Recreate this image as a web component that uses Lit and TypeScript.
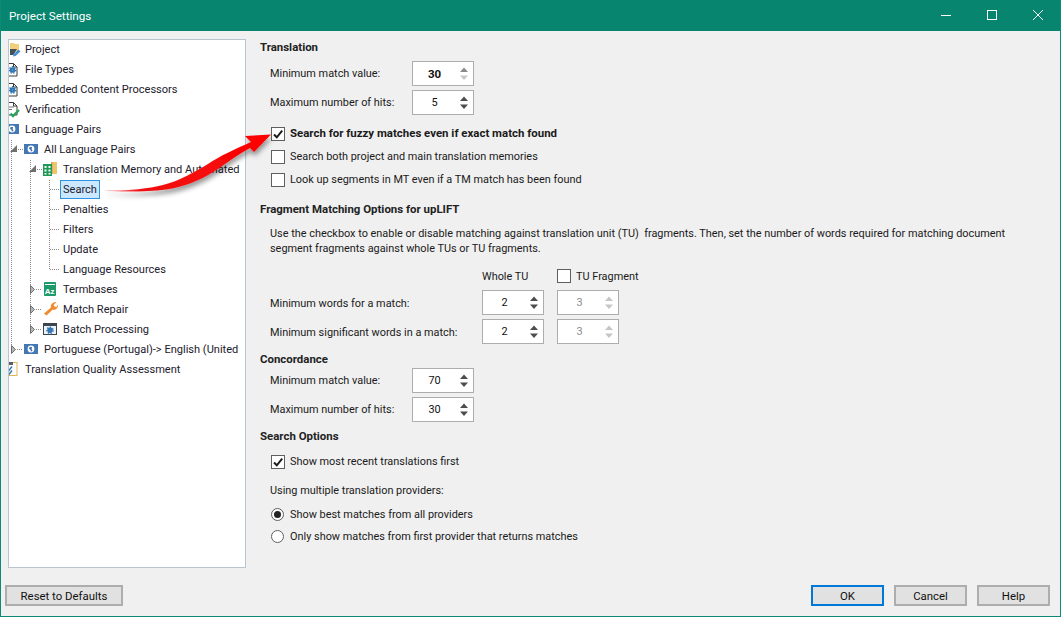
import { LitElement, html, css, svg } from "lit";
import { customElement } from "lit/decorators.js";

const gear = (cx: number, cy: number, r: number, fill = "#2f74b5") => svg`
  <circle cx=${cx} cy=${cy} r=${r} fill="none" stroke=${fill} stroke-width="2.4"/>
  <circle cx=${cx} cy=${cy} r=${r + 1.6} fill="none" stroke=${fill} stroke-width="1.4" stroke-dasharray="1.4 1.4"/>`;

const doc = (y: number) => svg`<path d="M3.500 ${y + 0.5}h7l3.500 3.500v${9}h-10.500z" fill="#fff" stroke="#3c3c3c"/><path d="M10.500 ${y + 0.5}v3.500h3.500" fill="none" stroke="#3c3c3c"/>`;

const globe = (y: number) => svg`<rect x="2" y=${y} width="14" height="10" fill="#4478b4"/><circle cx="9" cy=${y + 5} r="3.400" fill="#fff"/><path d="M7.600 ${y + 3}h2.600l-.6 2 1 1.400-1.600 1.400-.6-2-1.400-1z" fill="#4478b4"/>`;

const ICONS: Record<string, unknown> = {
  project: svg`<path d="M7 3h4l1 1h4v8H7z" fill="#f2cf7d"/><path d="M7 9h7l-3.500 6H7z" fill="#44505c"/><path d="M10.500 14.500l5-5 2 2-5 4.500-2.500.5z" fill="#3d8fd1"/>`,
  file: svg`${doc(3)}${gear(9.500, 10, 1.600)}`,
  verify: svg`${doc(2)}<path d="M6 7h5M6 9.500h3" stroke="#777"/><path d="M7.500 13.500l2.500 2.500 6-6" fill="none" stroke="#27a35a" stroke-width="2.400"/>`,
  globe: globe(4),
  tm: svg`<rect x="10" y="2" width="6" height="12" fill="#f0c36d"/><rect x="10" y="2" width="1.500" height="12" fill="#c9a55e"/><rect x="2" y="4" width="9" height="12" fill="#1e9a56"/><path d="M3.500 6h2v2h-2zM7.500 6h2v2h-2zM3.500 9.500h2v2h-2zM7.500 9.500h2v2h-2zM3.500 13h2v1.500h-2zM7.500 13h2v1.500h-2z" fill="#fff"/>`,
  term: svg`<rect x="3" y="2" width="12" height="14" rx="1" fill="#1e9a6a"/><rect x="4" y="4" width="10" height="1" fill="#fff"/><text x="3.800" y="14" font-size="8" font-weight="700" font-family="Liberation Sans, sans-serif" fill="#fff">Az</text>`,
  wrench: svg`<path d="M3 13.500l7-6c-.8-3 1.500-5.500 5.500-5.500l-2.800 2.800.7 1.800 2 .4L17 4.500c.4 3.500-2.500 6-5.500 5.200L5.500 15.500z" fill="#ef8a2e"/>`,
  batch: svg`<rect x="2.500" y="3.500" width="13" height="11" fill="#eef2f6" stroke="#3d4650"/><rect x="2" y="3" width="14" height="3" fill="#3d4650"/>${gear(9, 10.300, 1.500)}`,
  qa: svg`<rect x="4.500" y="2.500" width="9.500" height="13" fill="#fff" stroke="#e2b65b"/><path d="M4 2h6v3H4z" fill="#55606a"/><path d="M4 8.500l2 2 3-4M4 12.500l2 2 3-4" fill="none" stroke="#2f74b5" stroke-width="1.400"/>`,
};

const TREE: [number, string, string][] = [
  [0, "project", "Project"],
  [0, "file", "File Types"],
  [0, "file", "Embedded Content Processors"],
  [0, "verify", "Verification"],
  [0, "globe", "Language Pairs"],
  [1, "globe", "All Language Pairs"],
  [2, "tm", "Translation Memory and Automated"],
  [3, "", "Search"],
  [3, "", "Penalties"],
  [3, "", "Filters"],
  [3, "", "Update"],
  [3, "", "Language Resources"],
  [2, "term", "Termbases"],
  [2, "wrench", "Match Repair"],
  [2, "batch", "Batch Processing"],
  [1, "globe", "Portuguese (Portugal)-> English (United"],
  [0, "qa", "Translation Quality Assessment"],
];

@customElement("ui-spin")
class UiSpin extends LitElement {
  static properties = { value: {}, bold: { type: Boolean }, off: { type: Boolean }, top: { type: Boolean } };
  value = "";
  bold = false;
  off = false;
  top = false;
  static styles = css`
    :host { display: block; width: 62px; height: 25px; }
    .box { box-sizing: border-box; height: 25px; display: flex; align-items: center; background: #fff; border: 1px solid #adadad; color: #111; }
    .val { width: 43px; text-align: center; }
    .bold { font-weight: 700; font-size: 11.5px; }
    .off { color: #8c8c8c; }
    svg { display: block; margin: -1px 0 0 3px; }
  `;
  render() {
    const up = this.off ? "#c6c6c6" : this.top ? "#8a8a8a" : "#4d4d4d";
    const dn = this.off ? "#c6c6c6" : this.top ? "#c6c6c6" : "#4d4d4d";
    return html`<div class="box">
      <span class="val ${this.bold ? "bold" : ""} ${this.off ? "off" : ""}">${this.value}</span>
      <svg width="10" height="15" viewBox="0 0 10 15"><path d="M5 1.500l4 4.500h-8z" fill=${up}/><path d="M5 14L9 9.500h-8z" fill=${dn}/></svg>
    </div>`;
  }
}

@customElement("ui-check")
class UiCheck extends LitElement {
  static properties = { checked: { type: Boolean }, bold: { type: Boolean } };
  checked = false;
  bold = false;
  static styles = css`
    :host { display: flex; align-items: center; height: 23px; padding-left: 11px; color: #1a1a1a; }
    .b { box-sizing: border-box; flex: none; width: 14px; height: 14px; border: 1px solid #5f5f5f; background: #fff; margin-right: 5px; display: block; }
    .bold { font-weight: 700; font-size: 11.45px; padding-bottom: 2px; }
  `;
  render() {
    return html`<svg class="b" viewBox="0 0 12 12">${this.checked ? svg`<path d="M2 6.500l2.800 2.800L10.200 2.600" fill="none" stroke="#1c1c1c" stroke-width="2"/>` : ""}</svg>
      <span class=${this.bold ? "bold" : ""}><slot></slot></span>`;
  }
}

@customElement("app-root")
export class AppRoot extends LitElement {
  static styles = css`
    :host {
      display: flex; flex-direction: column; position: relative; box-sizing: border-box;
      width: 1061px; height: 617px; overflow: hidden; background: #f0f0f0;
      border: 1px solid #0a8a77; border-top: 0;
      font: 10.9px Roboto, "Noto Sans", sans-serif; color: #1a1a1a;
    }
    .title { flex: none; height: 31px; background: #07856f; color: #fff; display: flex; align-items: center; padding-left: 8px; font-size: 11.7px; }
    .title span { flex: 1; }
    .wc { display: block; width: 46px; height: 31px; }
    .wc.last { margin-right: -1px; }
    .main { flex: 1; display: flex; padding: 7px 0 0 7px; min-height: 0; }
    .tree { position: relative; flex: none; box-sizing: border-box; width: 238px; height: 529px; margin-top: 1px; background: #fff; border: 1px solid #b9c6cf; overflow: hidden; }
    .guides { position: absolute; left: 0; top: 0; }
    .rows { position: relative; margin-left: -6px; width: 300px; margin-top: -1px; }
    .row { height: 20px; display: flex; align-items: center; white-space: nowrap; color: #22202c; font-size: 11.05px; }
    .row svg { flex: none; margin-right: 4px; display: block; }
    .leaf { box-sizing: border-box; padding: 0 2px; margin-top: 1px; line-height: 17px; height: 19px; border: 1px solid transparent; }
    .sel { background: #cce8ff; border-color: #2f93e0; }
    .pane { flex: 1; padding-left: 14px; }
    h3 { margin: 0; height: 18px; line-height: 19px; font-size: 11.45px; font-weight: 700; color: #222; }
    .in { padding-left: 10px; }
    .line { display: flex; align-items: center; height: 25px; margin-bottom: 4px; }
    .lbl { width: 142px; flex: none; }
    .frag { width: 212px; flex: none; padding-top: 1px; }
    .gap { margin-left: 13px; }
    p { margin: 8px 0 0 10px; width: 745px; line-height: 15px; }
    .hdr { display: flex; align-items: center; height: 20px; margin: 10px 0 4px 222px; }
    .hdr b { font-weight: 400; width: 64px; }
    .radio { display: flex; align-items: center; height: 22px; padding-left: 11px; }
    .dot { box-sizing: border-box; flex: none; width: 13px; height: 13px; border: 1px solid #5f5f5f; border-radius: 50%; margin-right: 6px; background: #fff; display: flex; align-items: center; justify-content: center; }
    .dot.on::after { content: ""; width: 7px; height: 7px; border-radius: 50%; background: #222; }
    .foot { flex: none; height: 21px; display: flex; gap: 10px; padding: 0 10px 10px 4px; }
    .foot button { box-sizing: border-box; width: 73px; height: 21px; padding: 1px 0 0; background: #e1e1e1; border: 2px solid #adadad; font: inherit; font-size: 11.4px; color: #111; }
    .foot .reset { width: 118px; margin-right: auto; }
    .foot .ok { border-color: #0078d7; }
    .arrow { position: absolute; left: 0; top: 0; pointer-events: none; overflow: visible; }
  `;

  private guides() {
    const dots = "1 1";
    const h = (x1: number, x2: number, y: number) => svg`<path d="M${x1} ${y + 0.5}H${x2}" stroke="#8a8a8a" stroke-dasharray=${dots}/>`;
    const v = (x: number, y1: number, y2: number) => svg`<path d="M${x + 0.5} ${y1}V${y2}" stroke="#8a8a8a" stroke-dasharray=${dots}/>`;
    const open = (x: number, y: number) => svg`<path d="M${x} ${y + 7}l7-7v7z" fill="#6f6f6f"/>`;
    const shut = (x: number, y: number) => svg`<path d="M${x}.5 ${y}.5l4 4-4 4z" fill="#b5b5b5" stroke="#6f6f6f"/>`;
    return svg`<svg class="guides" width="236" height="527">
      ${v(2, 100, 305)}
      ${v(21, 120, 285)}
      ${v(40, 140, 229)}
      ${h(9, 14, 109)}
      ${h(28, 33, 129)}
      ${[149, 169, 189, 209, 229].map((y) => h(41, 50, y))}
      ${h(27, 33, 249)}${h(27, 33, 269)}${h(27, 33, 289)}
      ${h(8, 14, 309)}
      ${open(1, 105)}${open(20, 125)}
      ${shut(21, 245)}${shut(21, 265)}${shut(21, 285)}
      ${shut(2, 305)}
    </svg>`;
  }

  render() {
    return html`
      <div class="title"><span>Project Settings</span>
        <svg class="wc" viewBox="0 0 46 31"><path d="M18 15.500h10" stroke="#fff"/></svg>
        <svg class="wc" viewBox="0 0 46 31"><rect x="18.500" y="10.500" width="9" height="9" fill="none" stroke="#fff"/></svg>
        <svg class="wc last" viewBox="0 0 46 31"><path d="M18 10l10 10M28 10L18 20" stroke="#fff" fill="none"/></svg>
      </div>
      <div class="main">
        <div class="tree">
          ${this.guides()}
          <div class="rows">
            ${TREE.map(([l, icon, text]) => html`<div class="row" style="padding-left:${19 * l}px">
              ${icon
                ? html`<svg width="18" height="18" viewBox="0 0 18 18">${ICONS[icon]}</svg><span>${text}</span>`
                : html`<span class="leaf ${text === "Search" ? "sel" : ""}">${text}</span>`}
            </div>`)}
          </div>
        </div>
        <div class="pane">
          <h3>Translation</h3>
          <div class="in" style="margin-top:5px">
            <div class="line"><span class="lbl">Minimum match value:</span><ui-spin value="30" bold top></ui-spin></div>
            <div class="line"><span class="lbl">Maximum number of hits:</span><ui-spin value="5"></ui-spin></div>
          </div>
          <ui-check checked bold style="margin-top:7px">Search for fuzzy matches even if exact match found</ui-check>
          <ui-check>Search both project and main translation memories</ui-check>
          <ui-check>Look up segments in MT even if a TM match has been found</ui-check>
          <h3 style="margin-top:9px">Fragment Matching Options for upLIFT</h3>
          <p>Use the checkbox to enable or disable matching against translation unit (TU)&nbsp; fragments. Then, set the number of words required for matching document segment fragments against whole TUs or TU fragments.</p>
          <div class="hdr"><b>Whole TU</b><ui-check>TU Fragment</ui-check></div>
          <div class="in">
            <div class="line"><span class="frag">Minimum words for a match:</span><ui-spin value="2"></ui-spin><ui-spin class="gap" value="3" off></ui-spin></div>
            <div class="line" style="margin-bottom:0"><span class="frag">Minimum significant words in a match:</span><ui-spin value="2"></ui-spin><ui-spin class="gap" value="3" off></ui-spin></div>
          </div>
          <h3 style="margin-top:6px">Concordance</h3>
          <div class="in">
            <div class="line"><span class="lbl">Minimum match value:</span><ui-spin value="70"></ui-spin></div>
            <div class="line" style="margin-bottom:0"><span class="lbl">Maximum number of hits:</span><ui-spin value="30"></ui-spin></div>
          </div>
          <h3 style="margin-top:5px">Search Options</h3>
          <ui-check checked style="margin-top:5px">Show most recent translations first</ui-check>
          <div class="in" style="margin-top:8px;height:20px;line-height:20px">Using multiple translation providers:</div>
          <div class="radio" style="margin-top:2px"><span class="dot on"></span>Show best matches from all providers</div>
          <div class="radio"><span class="dot"></span>Only show matches from first provider that returns matches</div>
        </div>
      </div>
      <div class="foot">
        <button class="reset">Reset to Defaults</button>
        <button class="ok">OK</button>
        <button>Cancel</button>
        <button>Help</button>
      </div>
      <svg class="arrow" width="1061" height="617" viewBox="0 0 1061 617">
        <defs>
          <linearGradient id="ag" x1="0" y1="1" x2="1" y2="0">
            <stop offset="0" stop-color="#ffb0b0"/><stop offset=".12" stop-color="#f01010"/><stop offset="1" stop-color="#ff0000"/>
          </linearGradient>
          <filter id="as" x="-10%" y="-20%" width="120%" height="150%"><feDropShadow dx="1" dy="4" stdDeviation="2.500" flood-color="#000" flood-opacity=".4"/></filter>
        </defs>
        <path filter="url(#as)" fill="url(#ag)" d="M102 190.500C125 191 146 189 162 185C178 181 194 172 207 164C219 156 234 149 250 142L244 136L270 134.500L253 152L249 148C236 155 226 163 212 172C198 181 182 187 165 189.500C145 192 120 192 102 190.500Z"/>
      </svg>
    `;
  }
}
void UiSpin; void UiCheck;
